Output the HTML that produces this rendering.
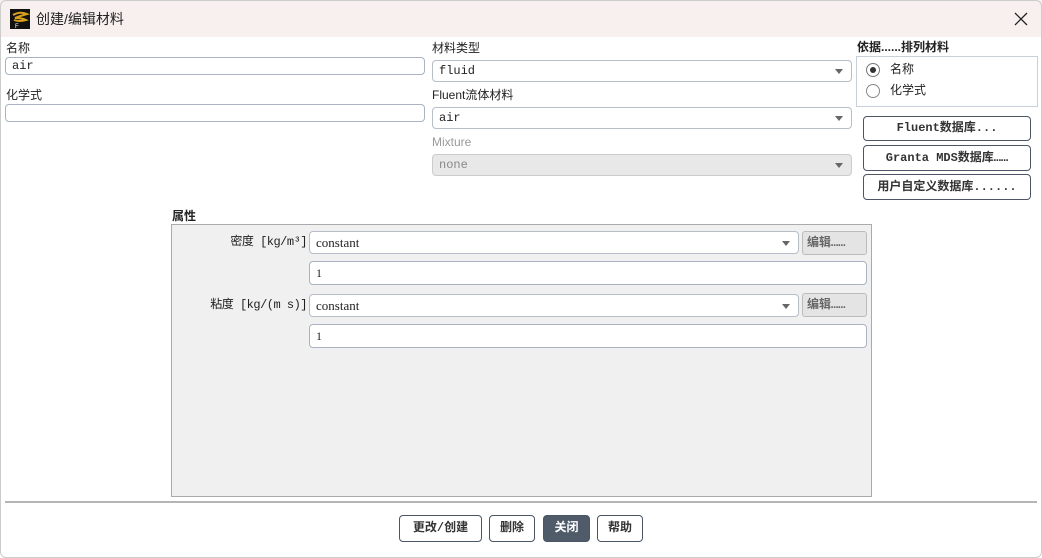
<!DOCTYPE html>
<html><head><meta charset="utf-8"><style>
*{box-sizing:border-box;margin:0;padding:0}
body{width:1042px;height:558px;background:#fff;position:relative;overflow:hidden;font-family:"Liberation Mono","Noto Sans CJK SC",monospace;font-size:12px;color:#222}
.a{position:absolute}
.lbl{position:absolute;font-family:"Liberation Sans","Noto Sans CJK SC",sans-serif;font-size:12px;line-height:14px}
.inp{position:absolute;border:1px solid #a9b3c2;border-radius:4px;background:#fff;padding-left:6px;font-size:12px;line-height:16px}
.sel{position:absolute;border:1px solid #b7bec9;border-radius:4px;background:#fff;padding-left:6px;font-size:12px}
.sel:after{content:"";position:absolute;right:8px;top:50%;margin-top:-2px;border-left:4px solid transparent;border-right:4px solid transparent;border-top:5px solid #666}
.btn{position:absolute;border:1px solid #4a5566;border-radius:4px;background:#fff;text-align:center;font-weight:bold;font-size:12px;color:#333;font-family:"Liberation Mono","Noto Sans CJK SC",monospace}
</style></head><body>
<div class="a" style="left:0;top:0;width:1042px;height:37px;background:#f8f0ee"></div>
<div class="a" style="left:10px;top:9px;width:20px;height:20px;background:#111"><svg width="20" height="20"><path d="M3 6 Q10 2 17 5 Q10 7 5 9 Q12 9 16 11 Q9 13 4 11" stroke="#d9a020" stroke-width="2" fill="none"/><text x="5" y="19" font-size="6" fill="#fff" font-family="Liberation Sans">F</text></svg></div>
<div class="lbl" style="left:36px;top:10px;font-size:14px;line-height:18px">创建/编辑材料</div>
<svg class="a" style="left:1014px;top:12px" width="14" height="14"><path d="M1 1L13 13M13 1L1 13" stroke="#222" stroke-width="1.3"/></svg>

<div class="lbl" style="left:6px;top:41px">名称</div>
<div class="inp" style="left:5px;top:57px;width:420px;height:18px">air</div>
<div class="lbl" style="left:6px;top:88px">化学式</div>
<div class="inp" style="left:5px;top:104px;width:420px;height:18px"></div>

<div class="lbl" style="left:432px;top:41px">材料类型</div>
<div class="sel" style="left:432px;top:60px;width:420px;height:22px;line-height:20px">fluid</div>
<div class="lbl" style="left:432px;top:88px">Fluent流体材料</div>
<div class="sel" style="left:432px;top:107px;width:420px;height:22px;line-height:20px">air</div>
<div class="lbl" style="left:432px;top:135px;color:#999">Mixture</div>
<div class="sel" style="left:432px;top:154px;width:420px;height:22px;line-height:20px;background:#e8e8e8;color:#888;border-color:#ccc">none</div>

<div class="lbl" style="left:857px;top:40px;font-weight:bold">依据......排列材料</div>
<div class="a" style="left:856px;top:56px;width:182px;height:51px;border:1px solid #c8d0dc"></div>
<div class="a" style="left:866px;top:63px;width:14px;height:14px;border:1px solid #777;border-radius:50%"><div class="a" style="left:3px;top:3px;width:6px;height:6px;border-radius:50%;background:#333"></div></div>
<div class="lbl" style="left:890px;top:62px">名称</div>
<div class="a" style="left:866px;top:84px;width:14px;height:14px;border:1px solid #888;border-radius:50%"></div>
<div class="lbl" style="left:890px;top:83px">化学式</div>
<div class="btn" style="left:863px;top:116px;width:168px;height:25px;line-height:23px">Fluent数据库...</div>
<div class="btn" style="left:863px;top:145px;width:168px;height:26px;line-height:24px">Granta MDS数据库……</div>
<div class="btn" style="left:863px;top:174px;width:168px;height:26px;line-height:24px">用户自定义数据库......</div>

<div class="lbl" style="left:172px;top:209px;font-weight:bold">属性</div>
<div class="a" style="left:171px;top:224px;width:701px;height:273px;background:#f0f0f0;border:1px solid #aaa"></div>
<div class="lbl" style="left:180px;top:235px;width:127px;text-align:right;font-family:'Liberation Mono','Noto Sans CJK SC',monospace;letter-spacing:-0.5px">密度 [kg/m³]</div>
<div class="sel" style="left:309px;top:231px;width:490px;height:23px;line-height:21px;font-family:'Liberation Serif',serif;font-size:13px">constant</div>
<div class="a" style="left:802px;top:231px;width:65px;height:24px;border:1px solid #bbb;border-radius:3px;background:#e4e4e4;color:#666;font-weight:bold;line-height:22px;padding-left:4px">编辑……</div>
<div class="inp" style="left:309px;top:261px;width:558px;height:24px;line-height:22px;font-family:'Liberation Serif',serif">1</div>
<div class="lbl" style="left:180px;top:298px;width:127px;text-align:right;font-family:'Liberation Mono','Noto Sans CJK SC',monospace;letter-spacing:-0.5px">粘度 [kg/(m s)]</div>
<div class="sel" style="left:309px;top:294px;width:490px;height:23px;line-height:21px;font-family:'Liberation Serif',serif;font-size:13px">constant</div>
<div class="a" style="left:802px;top:293px;width:65px;height:24px;border:1px solid #bbb;border-radius:3px;background:#e4e4e4;color:#666;font-weight:bold;line-height:22px;padding-left:4px">编辑……</div>
<div class="inp" style="left:309px;top:324px;width:558px;height:24px;line-height:22px;font-family:'Liberation Serif',serif">1</div>

<div class="a" style="left:5px;top:501px;width:1032px;height:2px;background:#b5b5b5"></div>
<div class="btn" style="left:399px;top:515px;width:83px;height:27px;line-height:25px">更改/创建</div>
<div class="btn" style="left:489px;top:515px;width:46px;height:27px;line-height:25px">删除</div>
<div class="btn" style="left:543px;top:515px;width:47px;height:27px;line-height:25px;background:#4f5b69;color:#fff">关闭</div>
<div class="btn" style="left:597px;top:515px;width:46px;height:27px;line-height:25px">帮助</div>
<div class="a" style="left:0;top:0;width:1042px;height:558px;border:1px solid #ccc;border-radius:6px;pointer-events:none"></div>
</body></html>
